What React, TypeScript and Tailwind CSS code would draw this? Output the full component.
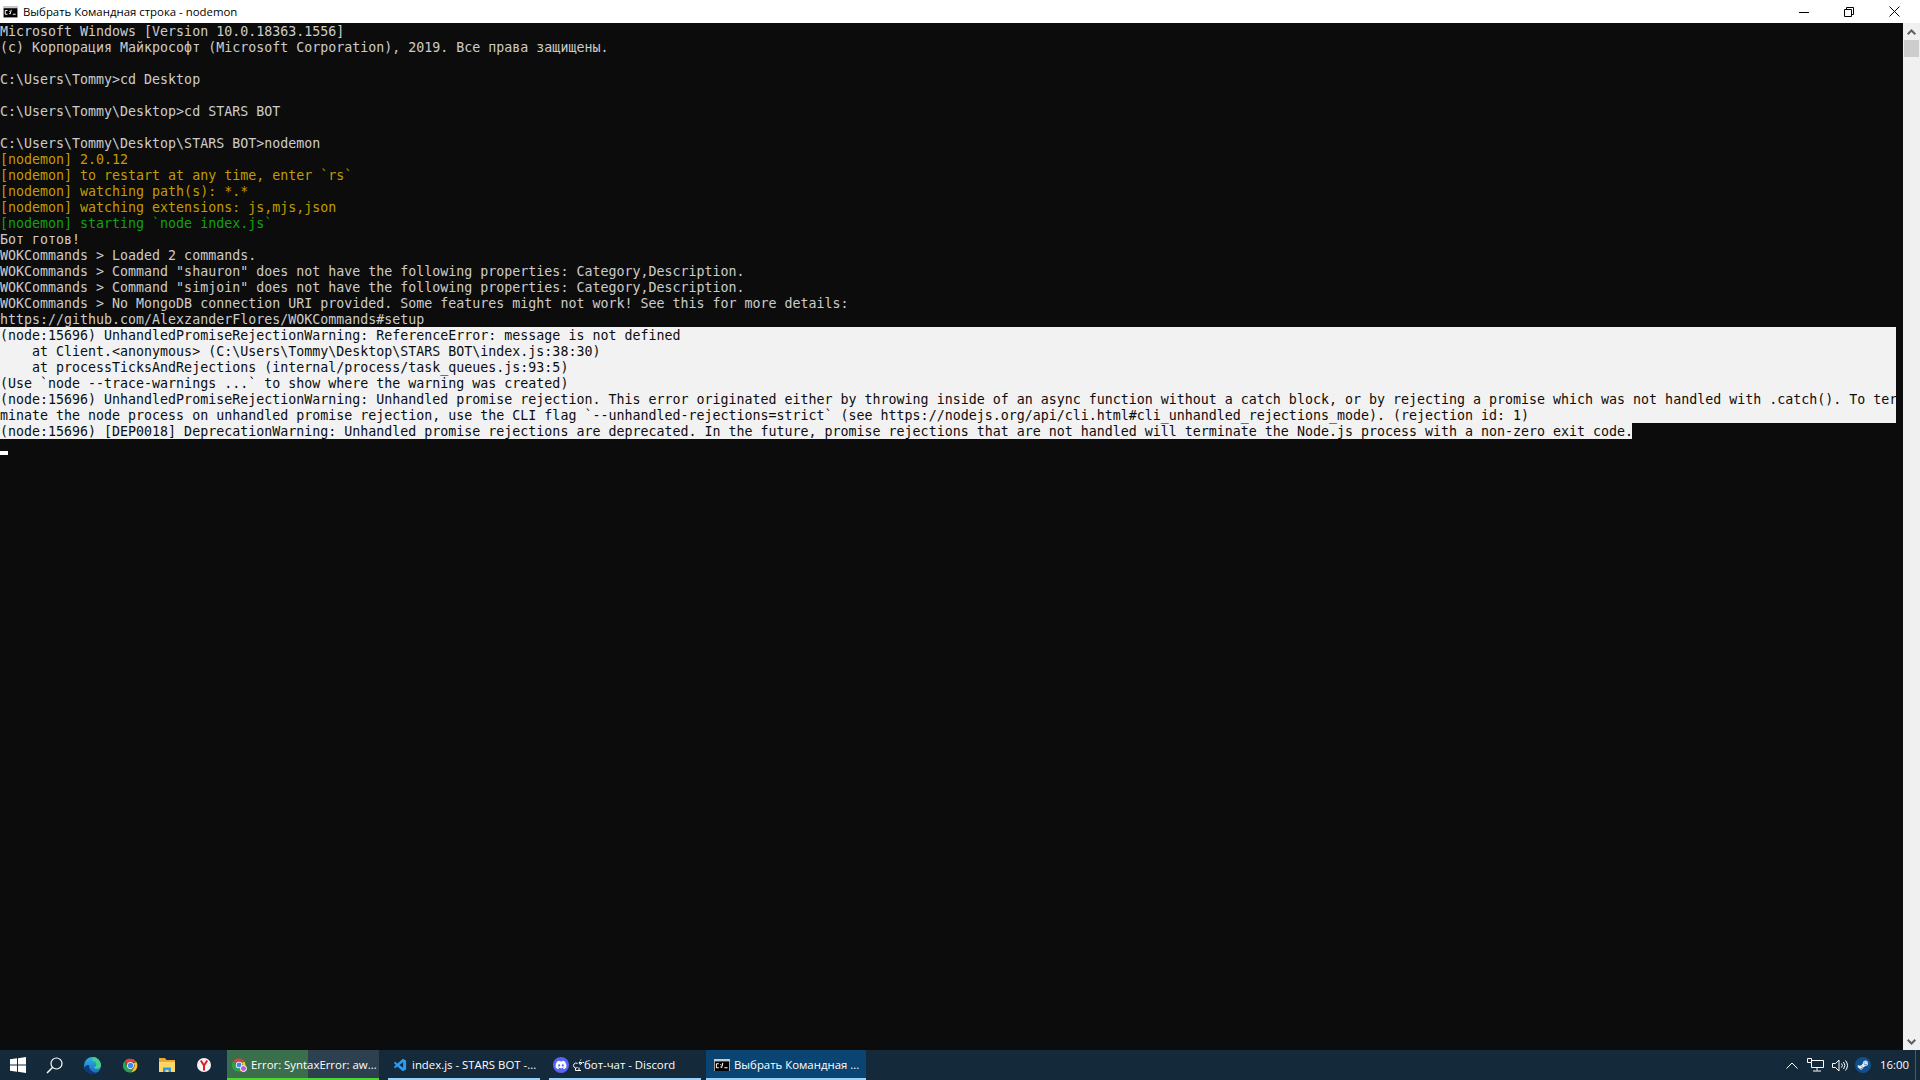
import { ReactNode } from "react";
import { FaDiscord, FaSteamSymbol } from "react-icons/fa";
import { VscVscode } from "react-icons/vsc";

type Line = { text: string; tone?: "yellow" | "green" | "selected" };

const lines: Line[] = [
  { text: "Microsoft Windows [Version 10.0.18363.1556]" },
  { text: "(c) Корпорация Майкрософт (Microsoft Corporation), 2019. Все права защищены." },
  { text: "" },
  { text: "C:\\Users\\Tommy>cd Desktop" },
  { text: "" },
  { text: "C:\\Users\\Tommy\\Desktop>cd STARS BOT" },
  { text: "" },
  { text: "C:\\Users\\Tommy\\Desktop\\STARS BOT>nodemon" },
  { text: "[nodemon] 2.0.12", tone: "yellow" },
  { text: "[nodemon] to restart at any time, enter `rs`", tone: "yellow" },
  { text: "[nodemon] watching path(s): *.*", tone: "yellow" },
  { text: "[nodemon] watching extensions: js,mjs,json", tone: "yellow" },
  { text: "[nodemon] starting `node index.js`", tone: "green" },
  { text: "Бот готов!" },
  { text: "WOKCommands > Loaded 2 commands." },
  { text: 'WOKCommands > Command "shauron" does not have the following properties: Category,Description.' },
  { text: 'WOKCommands > Command "simjoin" does not have the following properties: Category,Description.' },
  { text: "WOKCommands > No MongoDB connection URI provided. Some features might not work! See this for more details:" },
  { text: "https://github.com/AlexzanderFlores/WOKCommands#setup" },
  { text: "(node:15696) UnhandledPromiseRejectionWarning: ReferenceError: message is not defined", tone: "selected" },
  { text: "    at Client.<anonymous> (C:\\Users\\Tommy\\Desktop\\STARS BOT\\index.js:38:30)", tone: "selected" },
  { text: "    at processTicksAndRejections (internal/process/task_queues.js:93:5)", tone: "selected" },
  { text: "(Use `node --trace-warnings ...` to show where the warning was created)", tone: "selected" },
  { text: "(node:15696) UnhandledPromiseRejectionWarning: Unhandled promise rejection. This error originated either by throwing inside of an async function without a catch block, or by rejecting a promise which was not handled with .catch(). To ter", tone: "selected" },
  { text: "minate the node process on unhandled promise rejection, use the CLI flag `--unhandled-rejections=strict` (see https://nodejs.org/api/cli.html#cli_unhandled_rejections_mode). (rejection id: 1)", tone: "selected" },
];

const lastLine = "(node:15696) [DEP0018] DeprecationWarning: Unhandled promise rejections are deprecated. In the future, promise rejections that are not handled will terminate the Node.js process with a non-zero exit code.";

const ConsoleLine = ({ text, tone }: Line) => {
  const color =
    tone === "yellow" ? "text-[#c19c00]" : tone === "green" ? "text-[#13a10e]" : tone === "selected" ? "text-[#0c0c0c] bg-[#f2f2f2]" : "text-[#cccccc]";
  return <div className={`h-4 w-[1896px] pt-px leading-4 whitespace-pre ${color}`}>{text}</div>;
};

const CmdIcon = ({ size = 16 }: { size?: number }) => (
  <svg width={size} height={size * 0.8} viewBox="0 0 20 16" className="shrink-0">
    <rect width="20" height="16" fill="#c8c8c8" />
    <rect x="1" y="3" width="18" height="12" fill="#000" />
    <path d="M3 6h3M3 6v5M3 11h3M8 7h1M8 10h1M11 5l-1.500 6M13 11h4" stroke="#fff" strokeWidth="1.300" fill="none" />
  </svg>
);

const WindowsIcon = () => (
  <svg width="16" height="16" viewBox="0 0 16 16" fill="#fff">
    <path d="M0 2.300 7 1.300V7.500H0ZM8 1.200 16 0V7.500H8ZM0 8.500H7V14.700L0 13.700ZM8 8.500H16V16L8 14.800Z" />
  </svg>
);

const SearchIcon = () => (
  <svg width="17" height="17" viewBox="0 0 17 17" fill="none" stroke="#fff" strokeWidth="1.200">
    <circle cx="10.500" cy="6.500" r="5.500" />
    <path d="M6.500 10.500 1 16" strokeWidth="1.500" />
  </svg>
);

const EdgeIcon = () => (
  <svg width="17" height="17" viewBox="0 0 17 17">
    <defs>
      <linearGradient id="edge-a" x1="0" y1="0" x2="0" y2="1">
        <stop offset="0" stopColor="#2fb4ea" />
        <stop offset="1" stopColor="#1668b8" />
      </linearGradient>
    </defs>
    <circle cx="8.500" cy="8.500" r="8.500" fill="url(#edge-a)" />
    <path d="M9 0C13.500.3 17 4 17 8.500c0 2-1.800 3.300-3.800 3.300-1.800 0-3.200-.7-3.500-1.500 1.500-.2 2.700-1.300 2.700-2.800C12.400 5.500 10.500 3.800 8 3.800 8.300 2.500 8.500 1 9 0Z" fill="#45d08c" />
    <path d="M5 8.500c0 4 3.500 7 7.500 7.200-1.100.8-2.500 1.300-4 1.300C4.500 17 1 14.500 .5 10.500 1.500 8.500 4 7.500 5 8.500Z" fill="#0b3a7e" />
  </svg>
);

const ChromeIcon = ({ size = 15 }: { size?: number }) => (
  <svg width={size} height={size} viewBox="0 0 48 48" className="shrink-0">
    <path d="M24 2a22 22 0 0 1 19.050 11H24a11 11 0 0 0-10.500 7.700L5 10A22 22 0 0 1 24 2Z" fill="#db4437" />
    <path d="M43.050 13A22 22 0 0 1 26 46l9.500-16.500A11 11 0 0 0 32 16Z" fill="#fbc02d" />
    <path d="M5 10a22 22 0 0 0 21 36l9.500-16.500A11 11 0 0 1 15 27Z" fill="#2e9f4f" />
    <circle cx="24" cy="24" r="11" fill="#fff" />
    <circle cx="24" cy="24" r="8.500" fill="#4285f4" />
  </svg>
);

const FolderIcon = () => (
  <svg width="16" height="16" viewBox="0 0 16 16">
    <path d="M0 1h6l1.500 2H16v4H0Z" fill="#e8a93a" />
    <path d="M0 5h16v10H0Z" fill="#ffd663" />
    <path d="M4 15v-4.500h8V15h-2.500v-2h-3v2Z" fill="#2a9bdd" />
  </svg>
);

const YandexIcon = () => (
  <svg width="14" height="14" viewBox="0 0 14 14">
    <circle cx="7" cy="7" r="7" fill="#f5f5f5" />
    <path d="M3.800 2.500 7 7.500M10.200 2.500 7 7.500V12.500" stroke="#e01b22" strokeWidth="2" fill="none" />
  </svg>
);

const ChatGlyph = () => (
  <svg width="11" height="12" viewBox="0 0 11 12" fill="none" stroke="#fff" className="shrink-0">
    <path d="M4.500 4.500a2.500 2.500 0 1 0 0 4M2.500 9v2.500M2.500 11.500H8M6 8.500v3" />
    <path d="M7.500 1.500 8 .5M9.500 3.500h1.500M6 3l3 1-2 1.500Z" />
  </svg>
);

const PinnedIcon = ({ width, children }: { width: string; children: ReactNode }) => (
  <div className={`flex h-full items-center justify-center ${width}`}>{children}</div>
);

const TaskButton = ({ icon, label, className, underline = "bg-[#99d1f7]", children }: { icon: ReactNode; label: ReactNode; className: string; underline?: string; children?: ReactNode }) => (
  <div className={`relative flex h-full shrink-0 items-center ${className}`}>
    {children}
    <div className="relative flex w-[18px] shrink-0 justify-center">{icon}</div>
    <span className="relative ml-[3px] flex items-center whitespace-pre text-[11.4px] text-white">{label}</span>
    <div className={`absolute bottom-0 left-0 h-[2px] w-full ${underline}`} />
  </div>
);

const TitleBar = () => (
  <div className="flex h-[23px] shrink-0 items-center bg-white pl-[3px]" style={{ fontFamily: '"Open Sans", sans-serif' }}>
    <CmdIcon size={15} />
    <span className="ml-[5px] whitespace-pre text-[11.4px] leading-[23px] text-black">Выбрать Командная строка - nodemon</span>
    <div className="ml-auto flex items-center">
      <svg width="10" height="10" viewBox="0 0 10 10" className="mr-[35px]" stroke="#000" fill="none">
        <path d="M0 5.500H10" />
      </svg>
      <svg width="10" height="10" viewBox="0 0 10 10" className="mr-[35px]" stroke="#000" fill="none">
        <path d="M.5 2.500h7v7h-7ZM2.500 2.500V.5h7v7H7.500" />
      </svg>
      <svg width="11" height="11" viewBox="0 0 11 11" className="mr-[20px]" stroke="#000" fill="none">
        <path d="M.5.5l10 10M10.500.5l-10 10" />
      </svg>
    </div>
  </div>
);

const Scrollbar = () => (
  <div className="flex w-[17px] shrink-0 flex-col bg-[#f0f0f0]">
    <div className="flex h-[17px] items-center justify-center">
      <svg width="9" height="6" viewBox="0 0 9 6" fill="none" stroke="#606060" strokeWidth="2">
        <path d="M.7 5.300 4.500 1.500 8.300 5.300" />
      </svg>
    </div>
    <div className="mx-px h-[17px] bg-[#cdcdcd]" />
    <div className="flex-1" />
    <div className="flex h-[17px] items-center justify-center">
      <svg width="9" height="6" viewBox="0 0 9 6" fill="none" stroke="#606060" strokeWidth="2">
        <path d="M.7.7 4.500 4.500 8.300.7" />
      </svg>
    </div>
  </div>
);

const Taskbar = () => (
  <div className="flex h-[30px] shrink-0 items-center bg-[#14293a]" style={{ fontFamily: '"Open Sans", sans-serif' }}>
    <PinnedIcon width="w-[36px]"><WindowsIcon /></PinnedIcon>
    <PinnedIcon width="w-[37px]"><SearchIcon /></PinnedIcon>
    <PinnedIcon width="w-[39px]"><EdgeIcon /></PinnedIcon>
    <PinnedIcon width="w-[37px]"><ChromeIcon /></PinnedIcon>
    <PinnedIcon width="w-[36px]"><FolderIcon /></PinnedIcon>
    <PinnedIcon width="w-[37px]"><YandexIcon /></PinnedIcon>
    <div className="ml-[5px] flex h-full">
      <TaskButton
        icon={
          <>
            <ChromeIcon size={14} />
            <div className="absolute bottom-0 right-[1px] h-[7px] w-[7px] rounded-full border border-white bg-[#b55fd0]" />
          </>
        }
        label="Error: SyntaxError: aw..."
        className="w-[152px] bg-[#2d4050] pl-[3px]"
        underline="bg-[#4bd82c]"
      >
        <div className="absolute inset-y-0 left-0 w-[81px] bg-[#3a6e4d]" />
      </TaskButton>
      <TaskButton icon={<VscVscode size={15} color="#2a9df0" />} label="index.js - STARS BOT -..." className="ml-[9px] w-[152px] pl-[3px]" />
      <TaskButton
        icon={<FaDiscord size={16} color="#ffffff" className="rounded-full bg-[#5865f2] p-[2px]" />}
        label={
          <>
            <ChatGlyph />
            бот-чат - Discord
          </>
        }
        className="ml-[9px] w-[152px] pl-[3px]"
      />
      <TaskButton icon={<CmdIcon size={16} />} label="Выбрать Командная ..." className="ml-[5px] w-[160px] bg-[#0a4472] pl-[7px]" />
    </div>
    <div className="ml-auto flex h-full items-center text-white">
      <svg width="12" height="7" viewBox="0 0 12 7" fill="none" stroke="#fff" className="mr-[9px]">
        <path d="M.5 6.500 6 1l5.500 5.500" />
      </svg>
      <svg width="17" height="14" viewBox="0 0 17 14" fill="none" stroke="#fff" className="mr-[8px]">
        <path d="M.5.5h4v4h-4ZM4.500 2.500h12v7H4.500V4.500M10 9.500v3M6 13h8" />
      </svg>
      <svg width="16" height="13" viewBox="0 0 16 13" fill="none" stroke="#fff" className="mr-[7px]">
        <path d="M.5 4.500h3L7 1v11L3.500 8.500h-3ZM9.500 4.500a3 3 0 0 1 0 4M11.500 3a5.500 5.500 0 0 1 0 7M13.500 1.500a8 8 0 0 1 0 10" />
      </svg>
      <FaSteamSymbol size={16} color="#e6eef6" className="mr-[9px] rounded-full bg-[#0f4f8c] p-[2px]" />
      <span className="text-[11.4px] whitespace-pre">16:00</span>
      <div className="ml-[6px] mr-[4px] h-full w-px bg-[#4a5b68]" />
    </div>
  </div>
);

export default function App() {
  return (
    <div className="flex h-screen w-full flex-col overflow-hidden">
      <TitleBar />
      <div className="flex min-h-0 flex-1">
        <div className="min-w-0 flex-1 bg-[#0c0c0c] text-[13.3px]" style={{ fontFamily: '"DejaVu Sans Mono", monospace' }}>
          {lines.map((line, i) => (
            <ConsoleLine key={i} {...line} />
          ))}
          <div className="h-4 w-[1632px] whitespace-pre bg-[#f2f2f2] pt-px leading-4 text-[#0c0c0c]">{lastLine}</div>
          <div className="flex h-4 w-2 items-end">
            <div className="h-1 w-2 bg-white" />
          </div>
        </div>
        <Scrollbar />
      </div>
      <Taskbar />
    </div>
  );
}
